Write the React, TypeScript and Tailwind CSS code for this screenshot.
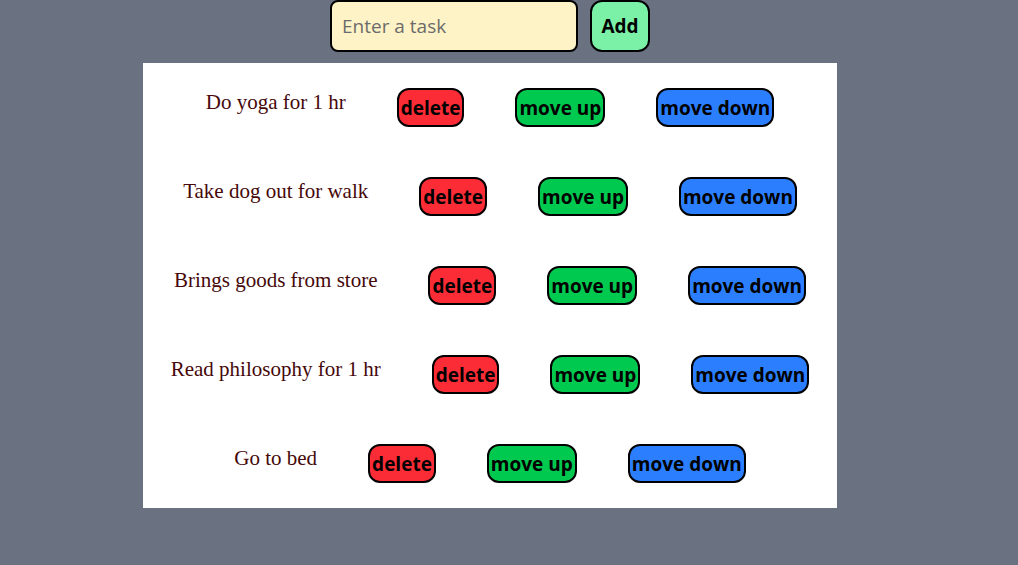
import React from 'react';

const tasks = [
    'Do yoga for 1 hr',
    'Take dog out for walk',
    'Brings goods from store',
    'Read philosophy for 1 hr',
    'Go to bed',
];

const btn = "h-[39px] px-[2px] rounded-[12px] border-2 border-black text-black font-bold text-[19px] leading-none mt-[25px] pt-[2px]";

export default function App() {
    return (
        <div className="min-h-[565px] w-full bg-[#6a7282]">
            <div className="w-[980px] flex flex-col items-center" style={{fontFamily: '"Open Sans", "Noto Sans", sans-serif'}}>
                <div className="flex gap-3">
                    <input
                        placeholder="Enter a task"
                        className="w-[248px] h-[52px] rounded-lg border-2 border-black bg-[#fef3c6] px-[10px] text-[19px] text-gray-800 placeholder:text-[#6b6b6b] outline-none"
                    />
                    <button className="w-[60px] h-[52px] rounded-xl border-2 border-black bg-[#7bf1a8] text-black font-bold text-[19px]">Add</button>
                </div>
                <ul className="mt-[11px] w-[694px] bg-white">
                    {tasks.map((t) => (
                        <li key={t} className="h-[89px] flex justify-center items-start gap-[51px]">
                            <span className="mt-[25px] text-[21px] leading-7 text-[#460809]" style={{fontFamily: '"Liberation Serif", "DejaVu Serif", serif'}}>{t}</span>
                            <button className={btn + " bg-[#fb2c36]"}>delete</button>
                            <button className={btn + " bg-[#00c950]"}>move up</button>
                            <button className={btn + " bg-[#2b7fff]"}>move down</button>
                        </li>
                    ))}
                </ul>
            </div>
        </div>
    );
}
